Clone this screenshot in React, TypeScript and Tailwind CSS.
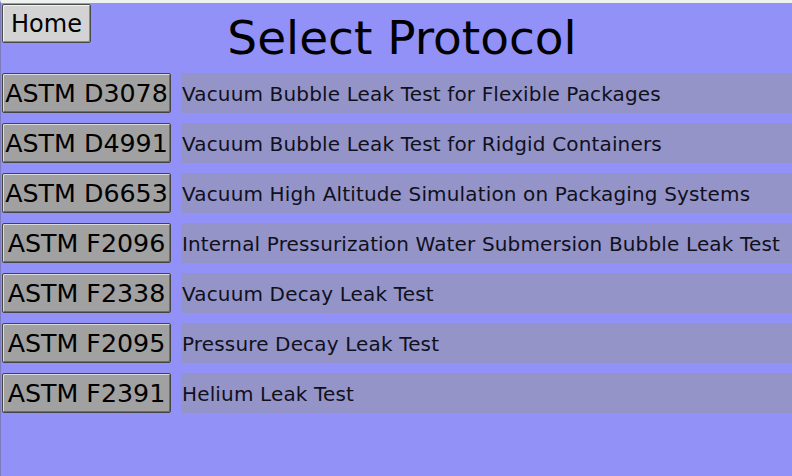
const protocols = [
  { code: "ASTM D3078", name: "Vacuum Bubble Leak Test for Flexible Packages" },
  { code: "ASTM D4991", name: "Vacuum Bubble Leak Test for Ridgid Containers" },
  { code: "ASTM D6653", name: "Vacuum High Altitude Simulation on Packaging Systems" },
  { code: "ASTM F2096", name: "Internal Pressurization Water Submersion Bubble Leak Test" },
  { code: "ASTM F2338", name: "Vacuum Decay Leak Test" },
  { code: "ASTM F2095", name: "Pressure Decay Leak Test" },
  { code: "ASTM F2391", name: "Helium Leak Test" },
];

export default function App() {
  return (
    <div className="h-screen w-full overflow-hidden bg-[#9191f7] border-t-[3px] border-t-[#eef2ee] border-l border-l-[#7b7bbd] font-['DejaVu_Sans','Verdana',sans-serif] text-black">
      <div className="grid h-[70px] grid-cols-[1fr_auto_1fr] items-start pl-[1px] pt-[1px]">
        <div>
          <button className="h-[39px] w-[89px] rounded-[2px] border border-[#4a4a4a] bg-[#d3d3d3] text-[24px] leading-none shadow-[inset_1px_1px_0_#f4f4f4,inset_-1px_-1px_0_#8a8a8a]">
            Home
          </button>
        </div>
        <h1 className="mt-[10px] pl-[10px] text-[47px] leading-none font-normal">
          Select Protocol
        </h1>
        <div />
      </div>

      <ul className="flex flex-col gap-[10px] pl-[1px]">
        {protocols.map((p) => (
          <li key={p.code} className="flex h-[40px] gap-[10px]">
            <button className="h-[40px] w-[169px] shrink-0 rounded-[2px] border border-[#454545] bg-[#a1a1a1] pt-[1px] text-[25.3px] leading-none shadow-[inset_1px_1px_0_#dadada,inset_-1px_-1px_0_#6c6c6c]">
              {p.code}
            </button>
            <div className="flex flex-1 items-center whitespace-nowrap bg-[#9494c8] pl-[1px] pt-[2px] text-[20px] tracking-[0.15px] text-[#10101c]">
              {p.name}
            </div>
          </li>
        ))}
      </ul>
    </div>
  );
}
